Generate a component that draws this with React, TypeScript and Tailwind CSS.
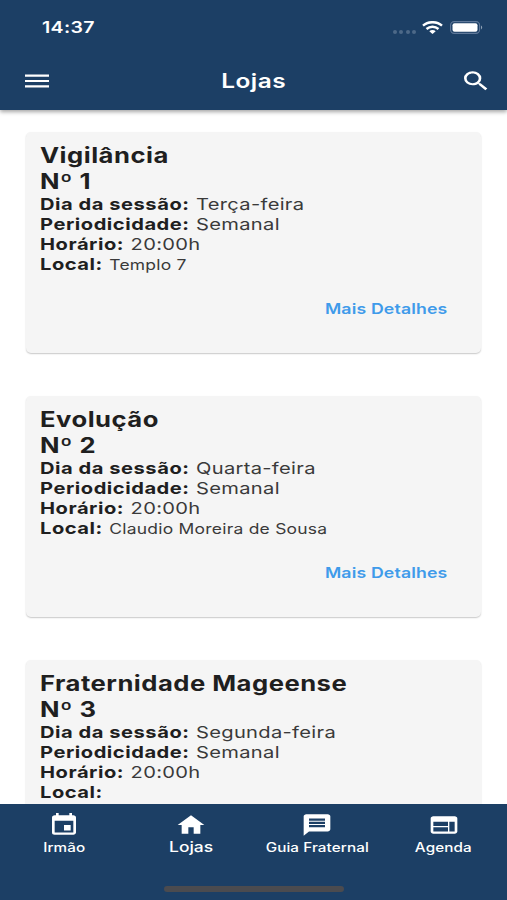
import type { ReactNode } from 'react';
import type { IconType } from 'react-icons';
import { MdEvent, MdHome, MdMenu, MdMessage, MdSearch, MdWeb } from 'react-icons/md';

interface Loja {
  nome: string;
  numero: number;
  dia: string;
  periodicidade: string;
  horario: string;
  local: string;
}

const lojas: Loja[] = [
  { nome: 'Vigilância', numero: 1, dia: 'Terça-feira', periodicidade: 'Semanal', horario: '20:00h', local: 'Templo 7' },
  { nome: 'Evolução', numero: 2, dia: 'Quarta-feira', periodicidade: 'Semanal', horario: '20:00h', local: 'Claudio Moreira de Sousa' },
  { nome: 'Fraternidade Mageense', numero: 3, dia: 'Segunda-feira', periodicidade: 'Semanal', horario: '20:00h', local: '' },
];

const tabs: { label: string; icon: IconType; active?: boolean }[] = [
  { label: 'Irmão', icon: MdEvent },
  { label: 'Lojas', icon: MdHome, active: true },
  { label: 'Guia Fraternal', icon: MdMessage },
  { label: 'Agenda', icon: MdWeb },
];

function StatusBar() {
  return (
    <div className="flex h-[54px] items-center justify-between pl-[42px] pr-[24px]">
      <span className="origin-left scale-x-[1.22] text-[16px] font-semibold leading-none tracking-[0.3px]">14:37</span>
      <div className="flex items-center">
        <div className="mr-[6px] mt-[9px] flex gap-[2.4px]">
          {[0, 1, 2, 3].map((i) => (
            <span key={i} className="h-[4px] w-[4px] rounded-full bg-[#4d6988]" />
          ))}
        </div>
        <svg className="mr-[7px] h-[13px] w-[21px]" viewBox="0 0 21 13" fill="none" stroke="white" strokeWidth="2.4">
          <path d="M1 4.7C6.3 0 14.7 0 20 4.7" />
          <path d="M4.5 8C8 4.9 13 4.9 16.5 8" />
          <path d="M7.3 10.2C9.2 8.7 11.8 8.7 13.7 10.2L10.5 13Z" fill="white" stroke="none" />
        </svg>
        <svg className="h-[13px] w-[33px]" viewBox="0 0 33 13">
          <rect x="0.6" y="0.6" width="29" height="11.8" rx="3.6" fill="none" stroke="#60799a" strokeWidth="1.1" />
          <rect x="2.5" y="2.2" width="25" height="8.6" rx="2" fill="white" />
          <path d="M31 4.6C32.6 5.2 32.6 7.8 31 8.4Z" fill="#8fa1b4" />
        </svg>
      </div>
    </div>
  );
}

function Header() {
  return (
    <header className="relative z-10 h-[110px] shrink-0 bg-[#1c3f65] text-white shadow-[0_2px_4px_rgba(0,0,0,0.35)]">
      <StatusBar />
      <div className="grid h-[54px] grid-cols-[1fr_auto_1fr] items-center pl-[21px] pr-[15px]">
        <MdMenu className="h-[26px] w-[32px]" preserveAspectRatio="none" />
        <h1 className="mr-[5px] scale-x-[1.22] text-[20px] font-semibold tracking-[0.4px]">Lojas</h1>
        <MdSearch className="h-[26px] w-[32px] justify-self-end" preserveAspectRatio="none" />
      </div>
    </header>
  );
}

function Row({ label, children, small }: { label: string; children?: ReactNode; small?: boolean }) {
  return (
    <p className="flex h-[20.2px] w-max origin-left scale-x-[1.22] items-center gap-[5.3px] text-[16.5px]">
      <b className="font-bold tracking-[0.43px]">{label}:</b>
      <span className={small ? 'text-[14.3px] tracking-[0.2px] text-[#3a3a3a]' : 'tracking-[0.25px] text-[#3a3a3a]'}>
        {children}
      </span>
    </p>
  );
}

function LojaCard({ loja }: { loja: Loja }) {
  return (
    <article className="flex h-[221px] shrink-0 flex-col rounded-[5px] bg-[#f5f5f5] pl-[14px] pt-[11px] text-[#1f1f1f] shadow-[0_1px_1.5px_rgba(0,0,0,0.22)]">
      <h2 className="w-max origin-left scale-x-[1.22] text-[21px] font-bold leading-[25.5px] tracking-[0.4px]">
        {loja.nome}
        <br />
        Nº {loja.numero}
      </h2>
      <Row label="Dia da sessão">{loja.dia}</Row>
      <Row label="Periodicidade">{loja.periodicidade}</Row>
      <Row label="Horário">{loja.horario}</Row>
      <Row label="Local" small>{loja.local}</Row>
      {loja.local && (
        <button className="mr-[33.5px] mt-[24px] origin-right scale-x-[1.22] self-end text-[14.5px] font-semibold leading-[20px] tracking-[0.12px] text-[#3f9bea]">
          Mais Detalhes
        </button>
      )}
    </article>
  );
}

function BottomNav() {
  return (
    <nav className="flex h-[96px] shrink-0 flex-col justify-between bg-[#1c3f65] pb-[8px] pt-[8px] text-white">
      <div className="grid grid-cols-4 pl-[1px]">
        {tabs.map(({ label, icon: Icon, active }) => (
          <a key={label} className="flex flex-col items-center">
            <Icon className="h-[26px] w-[32px]" preserveAspectRatio="none" />
            <span
              className={`scale-x-[1.22] whitespace-nowrap font-medium ${active ? 'text-[14.3px] leading-[18px]' : 'text-[12.5px] leading-[20px] tracking-[0.07px]'}`}
            >
              {label}
            </span>
          </a>
        ))}
      </div>
      <div className="mx-auto h-[6px] w-[180px] rounded-full bg-[#4b4b4f]" />
    </nav>
  );
}

export default function App() {
  return (
    <div className="flex h-[900px] w-[507px] flex-col overflow-hidden bg-white font-['Inter',sans-serif]">
      <Header />
      <main className="flex min-h-0 flex-1 flex-col gap-[43px] overflow-hidden px-[26px] pt-[22px]">
        {lojas.map((loja) => (
          <LojaCard key={loja.numero} loja={loja} />
        ))}
      </main>
      <BottomNav />
    </div>
  );
}
